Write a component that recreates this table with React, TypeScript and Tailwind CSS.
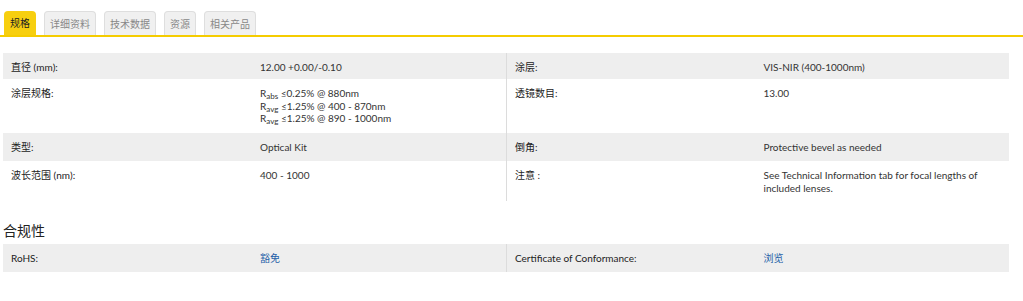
import React from 'react';

/* ─── Datos ─────────────────────────────────────────── */
const tabs = ['规格', '详细资料', '技术数据', '资源', '相关产品'];

type Cell = { label: React.ReactNode; value: React.ReactNode };

const Sub = ({ base, sub }: { base: string; sub: string }) => (
  <span>
    {base}
    <sub className="text-[8px] relative top-[2px]">{sub}</sub>
  </span>
);

const coating = (
  <div className="leading-[12.5px]">
    <div><Sub base="R" sub="abs" /> ≤0.25% @ 880nm</div>
    <div><Sub base="R" sub="avg" /> ≤1.25% @ 400 - 870nm</div>
    <div><Sub base="R" sub="avg" /> ≤1.25% @ 890 - 1000nm</div>
  </div>
);

const rows: { left: Cell; right: Cell; gray: boolean; h: string }[] = [
  {
    left: { label: '直径 (mm):', value: '12.00 +0.00/-0.10' },
    right: { label: '涂层:', value: 'VIS-NIR (400-1000nm)' },
    gray: true,
    h: 'h-[26px]',
  },
  {
    left: { label: '涂层规格:', value: coating },
    right: { label: '透镜数目:', value: '13.00' },
    gray: false,
    h: 'h-[54px]',
  },
  {
    left: { label: '类型:', value: 'Optical Kit' },
    right: { label: '倒角:', value: 'Protective bevel as needed' },
    gray: true,
    h: 'h-[28px]',
  },
  {
    left: { label: '波长范围 (nm):', value: '400 - 1000' },
    right: {
      label: '注意 :',
      value: 'See Technical Information tab for focal lengths of included lenses.',
    },
    gray: false,
    h: 'h-[40px]',
  },
];

function Half({ cell, border }: { cell: Cell; border?: boolean }) {
  return (
    <div className={`flex w-[503px] ${border ? 'border-l border-[#dcdcdc]' : ''}`}>
      <div className="w-[257px] pl-[8px] pt-[8px] text-[#222]">{cell.label}</div>
      <div className="w-[246px] pt-[8px] pr-[4px] leading-[13px] text-[#333]">{cell.value}</div>
    </div>
  );
}

export default function App() {
  return (
    <div
      className="w-[1023px] h-[301px] bg-white text-[10px] leading-[12px] overflow-hidden"
      style={{ fontFamily: 'Lato, "Noto Sans CJK SC", sans-serif' }}
    >
      {/* Pestañas */}
      <div className="flex items-end gap-[8px] pl-[4px] pt-[11px] border-b-[2px] border-[#f5cc00]">
        {tabs.map((t, i) => (
          <div
            key={t}
            className={
              i === 0
                ? 'h-[24px] px-[6px] flex items-center rounded-t-[4px] bg-[#f7cf0f] text-[#222]'
                : 'h-[24px] px-[5px] flex items-center rounded-t-[4px] bg-[#f0f0f0] border border-b-0 border-[#dedede] text-[#888]'
            }
          >
            {t}
          </div>
        ))}
      </div>

      {/* Tabla de especificaciones */}
      <div className="ml-[3px] mt-[16px] w-[1006px]">
        {rows.map((r, i) => (
          <div key={i} className={`flex ${r.h} ${r.gray ? 'bg-[#eeeeee]' : ''}`}>
            <Half cell={r.left} />
            <Half cell={r.right} border />
          </div>
        ))}
      </div>

      {/* Cumplimiento */}
      <h3 className="ml-[3px] mt-[22px] mb-[5px] text-[14px] leading-[16px] text-[#222]">合规性</h3>
      <div className="ml-[3px] w-[1006px] h-[28px] flex bg-[#eeeeee]">
        <Half cell={{ label: 'RoHS:', value: <span className="text-[#1f5fa8]">豁免</span> }} />
        <Half
          cell={{ label: 'Certificate of Conformance:', value: <span className="text-[#1f5fa8]">浏览</span> }}
          border
        />
      </div>
    </div>
  );
}
